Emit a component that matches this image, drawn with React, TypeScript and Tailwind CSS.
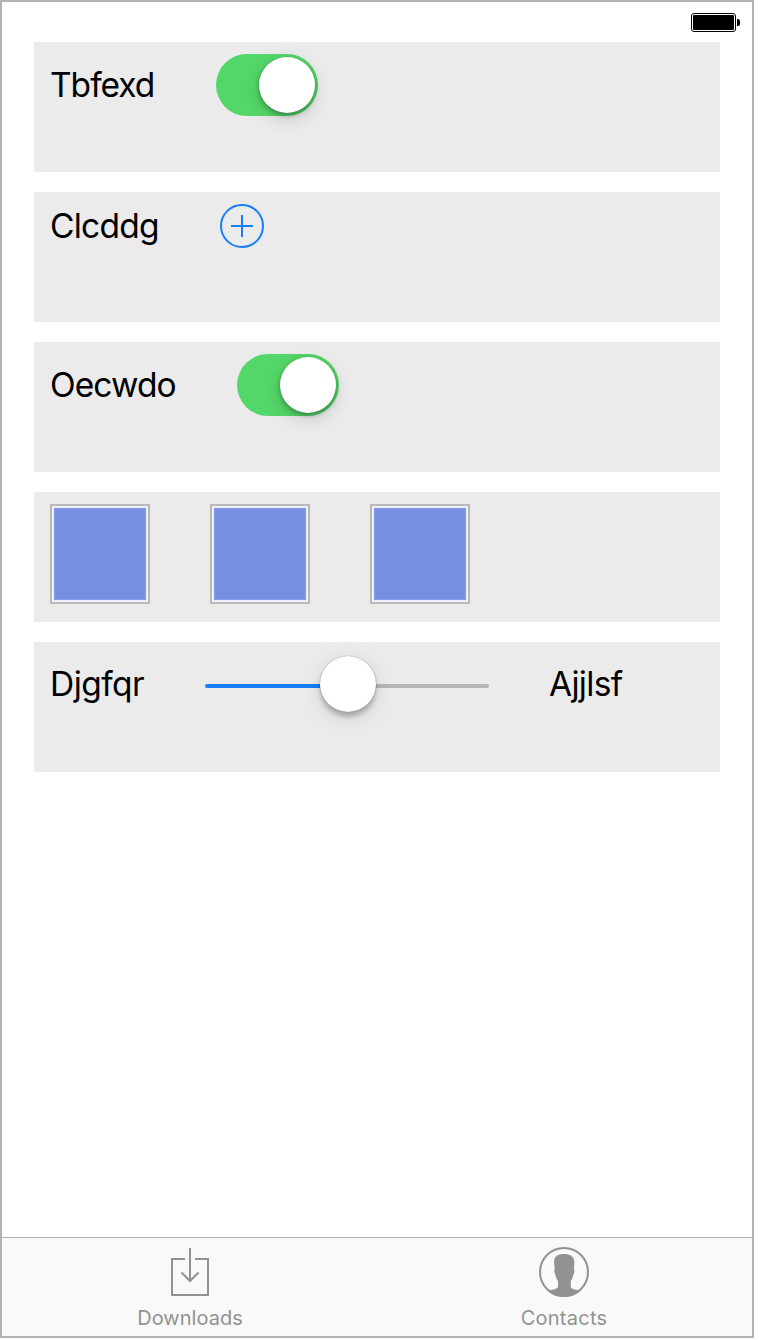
import type { ReactNode } from 'react';

function Row({ children }: { children: ReactNode }) {
  return <section className="flex h-[130px] items-start gap-[60px] bg-[#ebebeb] pt-3 pl-4">{children}</section>;
}

function Label({ children, className }: { children: string; className: string }) {
  return (
    <span className={`shrink-0 whitespace-nowrap text-[33.5px] text-black ${className}`}>{children}</span>
  );
}

function Toggle() {
  return (
    <button
      role="switch"
      aria-checked="true"
      className="flex h-[62px] w-[102px] items-center justify-end rounded-full bg-[#54d769] pr-[3px]"
    >
      <span className="size-14 rounded-full bg-white shadow-[0_6px_18px_rgba(0,0,0,0.15),0_2px_5px_rgba(0,0,0,0.32)]" />
    </button>
  );
}

function Swatch() {
  return (
    <div className="size-[100px] border-2 border-[#b9b9b9] bg-[#f3f3fa] p-px">
      <div className="size-full border border-[#e9edfb] bg-[#768fe3] shadow-[inset_0_0_0_1px_#899ee7]" />
    </div>
  );
}

function Slider() {
  return (
    <div className="flex h-[64px] w-[284px] items-center">
      <div className="h-1 w-[115px] rounded-l-full bg-[#147efb]" />
      <div className="z-10 mb-1 size-14 shrink-0 rounded-full bg-white shadow-[0_0_1px_rgba(0,0,0,0.5),0_5px_5px_rgba(0,0,0,0.24),0_6px_24px_rgba(0,0,0,0.1)]" />
      <div className="h-1 flex-1 rounded-r-full bg-[#b6b6b6]" />
    </div>
  );
}

export default function App() {
  return (
    <main className="flex h-[1338px] w-[754px] flex-col border-2 border-[#b2b2b2] bg-white font-['Inter','Liberation_Sans',sans-serif]">
      <header className="flex h-10 shrink-0 justify-end pt-[11px] pr-3">
        <svg width="49" height="20" viewBox="0 0 49 20" aria-label="Battery full">
          <rect x=".5" y=".5" width="44" height="18" rx="2.5" fill="none" stroke="#000" />
          <rect x="2" y="2" width="41" height="15" rx="1" />
          <path d="M46 6h1a2 2 0 0 1 2 2v3a2 2 0 0 1-2 2h-1z" />
        </svg>
      </header>
      <div className="flex flex-1 flex-col gap-5 px-8">
        <Row>
          <Label className="w-[106px] leading-[62px] tracking-[-1px]">Tbfexd</Label>
          <Toggle />
        </Row>
        <Row>
          <Label className="w-[110px] leading-[44px] tracking-[-0.75px]">Clcddg</Label>
          <svg width="44" height="44" viewBox="0 0 44 44" fill="none" stroke="#147efb" strokeWidth="2" aria-label="Add">
            <circle cx="22" cy="22" r="21" />
            <path d="M22 11v22M11 22h22" />
          </svg>
        </Row>
        <Row>
          <Label className="w-[127px] leading-[62px] tracking-[-0.9px]">Oecwdo</Label>
          <Toggle />
        </Row>
        <Row>
          <Swatch />
          <Swatch />
          <Swatch />
        </Row>
        <Row>
          <Label className="w-[95px] leading-[60px] tracking-[-0.55px]">Djgfqr</Label>
          <Slider />
          <Label className="leading-[60px] tracking-[-0.7px]">Ajjlsf</Label>
        </Row>
      </div>
      <nav className="flex h-[99px] shrink-0 border-t border-[#b2b2b2] bg-[#f9f9f9] text-[20px] leading-6 text-[#929292]">
        <a className="flex w-[376px] flex-col items-center pt-2">
          <svg width="50" height="52" viewBox="0 0 50 52" fill="none" stroke="currentColor" strokeWidth="2">
            <path d="M20 13H7v36h36V13H30M25 2v33M16.5 26.5l8.5 8.5 8.5-8.5" />
          </svg>
          <span className="mt-2 tracking-[0.02px]">Downloads</span>
        </a>
        <a className="flex w-[372px] flex-col items-center pt-2">
          <svg width="50" height="52" viewBox="0 0 50 52">
            <circle cx="25" cy="26" r="24" fill="none" stroke="currentColor" strokeWidth="2" />
            <path
              d="M25 8c6.500 0 10 2.500 10.300 7.500L35 23c.8.800.2 5-.8 6-.5 2.500-1.200 4.500-2.400 6v6.200c1 2.300 5.700 2.300 9.700 3.300C37 49 31.500 51 25 51S13 49 8.500 44.500c4-1 9.200-1 10.500-3.300V35c-1.200-1.500-2-3.500-2.500-6-1-1-1.600-5.200-.8-6l-.7-7.500C15.200 10.500 18.500 8 25 8z"
              fill="currentColor"
            />
          </svg>
          <span className="mt-2 tracking-[0.25px]">Contacts</span>
        </a>
      </nav>
    </main>
  );
}
